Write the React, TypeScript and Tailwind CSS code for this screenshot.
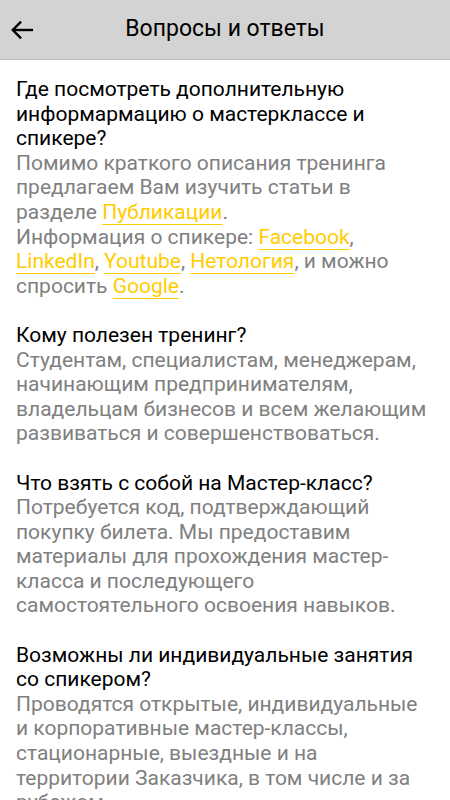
import React from 'react';

const Link: React.FC<{ children: React.ReactNode }> = ({ children }) => (
  <a href="#" className="text-[#ffcc00] underline decoration-[#ffcc00] decoration-1 underline-offset-[5px]">
    {children}
  </a>
);

const faq: { q: string; a: React.ReactNode }[] = [
  {
    q: 'Где посмотреть дополнительную информармацию о мастерклассе и спикере?',
    a: (
      <>
        Помимо краткого описания тренинга предлагаем Вам изучить статьи в разделе <Link>Публикации</Link>.
        <br />
        Информация о спикере: <Link>Facebook</Link>, <Link>LinkedIn</Link>, <Link>Youtube</Link>,{' '}
        <Link>Нетология</Link>, и можно спросить <Link>Google</Link>.
      </>
    ),
  },
  {
    q: 'Кому полезен тренинг?',
    a: 'Студентам, специалистам, менеджерам, начинающим предпринимателям, владельцам бизнесов и всем желающим развиваться и совершенствоваться.',
  },
  {
    q: 'Что взять с собой на Мастер-класс?',
    a: 'Потребуется код, подтверждающий покупку билета. Мы предоставим материалы для прохождения мастер-класса и последующего самостоятельного освоения навыков.',
  },
  {
    q: 'Возможны ли индивидуальные занятия со спикером?',
    a: 'Проводятся открытые, индивидуальные и корпоративные мастер-классы, стационарные, выездные и на территории Заказчика, в том числе и за рубежом.',
  },
];

const App: React.FC = () => {
  return (
    <div className="min-h-screen bg-white font-['Roboto',Arial,sans-serif]">
      <header className="relative flex h-[60px] items-center justify-center border-b border-[#bdbdbd] bg-[#d3d3d3]">
        <button className="absolute left-[10px] top-[18px] flex h-6 w-6 items-center justify-center">
          <svg width="26" height="22" viewBox="0 0 26 22" fill="none" stroke="#000" strokeWidth="2.6" strokeLinecap="butt">
            <path d="M25 11H3" />
            <path d="M12 2L3 11l9 9" />
          </svg>
        </button>
        <h1 className="text-[23px] text-black">Вопросы и ответы</h1>
      </header>
      <main className="flex flex-col gap-[24.6px] pl-4 pr-[22px] pt-[17px] text-[21px] leading-[24.6px]">
        {faq.map((item) => (
          <section key={item.q}>
            <h2 className="text-black">{item.q}</h2>
            <p className="text-[#808080]">{item.a}</p>
          </section>
        ))}
      </main>
    </div>
  );
};

export default App;
